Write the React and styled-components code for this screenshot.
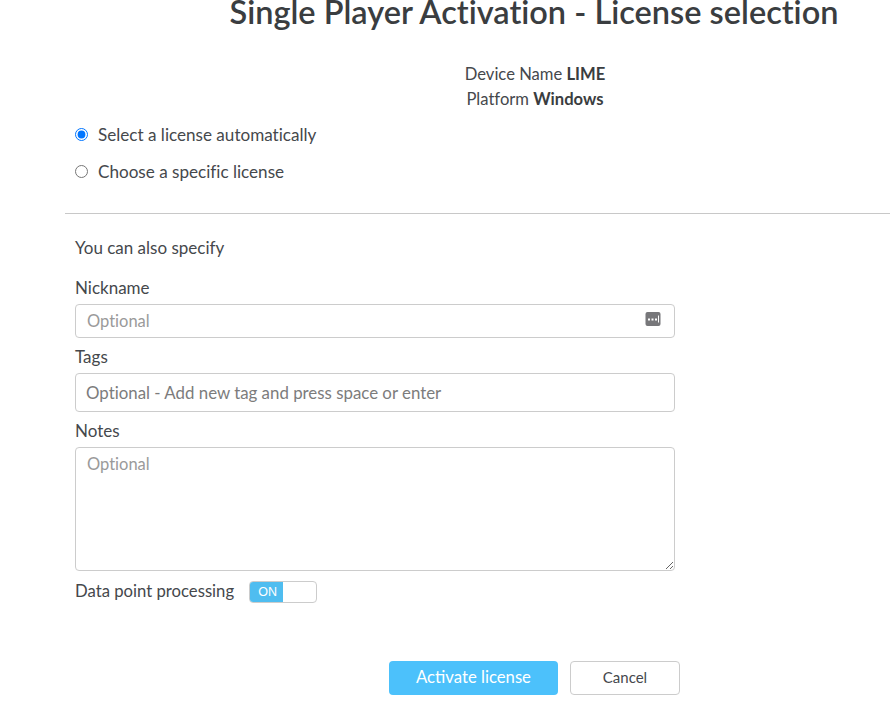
import React, { useState } from "react";
import styled, { createGlobalStyle } from "styled-components";

const GlobalStyle = createGlobalStyle`
  html, body {
    margin: 0;
    padding: 0;
    background: #fff;
    overflow: hidden;
  }
  body {
    font-family: Lato, "Open Sans", "Liberation Sans", sans-serif;
    font-variant-ligatures: none;
    color: #45484c;
  }
`;

const Page = styled.div`
  width: 890px;
  height: 716px;
  overflow: hidden;
  padding-left: 65px;
  box-sizing: border-box;
`;

const Title = styled.h1`
  margin: 0;
  width: 938px;
  height: 24px;
  text-align: center;
  font-size: 32.5px;
  line-height: 24px;
  font-weight: 600;
  color: #3a3d40;
  white-space: nowrap;
`;

const DeviceInfo = styled.div`
  margin-top: 38px;
  padding-left: 399px;
  width: 142px;
  text-align: center;
  font-size: 16.6px;
  line-height: 25px;
  white-space: nowrap;

  b {
    font-weight: 700;
    color: #3a3d40;
  }
`;

const Choices = styled.div`
  display: flex;
  flex-direction: column;
  gap: 17px;
  margin-top: 12px;
  padding-left: 10px;
`;

const Choice = styled.label`
  display: flex;
  align-items: center;
  gap: 10px;
  height: 20px;
  font-size: 17.1px;
  cursor: pointer;

  input {
    margin: 0;
    width: 13px;
    height: 13px;
    accent-color: #0075ff;
  }
`;

const Divider = styled.hr`
  margin: 32px 0 0;
  border: 0;
  border-top: 1px solid #c8c8c8;
`;

const Form = styled.div`
  display: flex;
  flex-direction: column;
  width: 600px;
  margin-left: 10px;
`;

const Hint = styled.div`
  margin-top: 24px;
  font-size: 17px;
  line-height: 20px;
`;

const Label = styled.div`
  font-size: 17px;
  line-height: 20px;
  margin-top: ${(p) => p.$top}px;
  margin-bottom: ${(p) => p.$bottom}px;
`;

const InputWrap = styled.div`
  position: relative;
  height: 34px;
`;

const fieldStyle = `
  display: block;
  width: 100%;
  box-sizing: border-box;
  border: 1px solid #cccccc;
  border-radius: 4px;
  font-family: inherit;
  font-variant-ligatures: none;
  color: #45484c;
  outline: none;
  background: #fff;
`;

const TextInput = styled.input`
  ${fieldStyle}
  height: ${(p) => p.$height}px;
  padding: 0 ${(p) => p.$pad}px 1px;
  font-size: ${(p) => p.$size}px;

  &::placeholder {
    color: ${(p) => p.$hint};
    opacity: 1;
  }
`;

const KeyIcon = styled.svg`
  position: absolute;
  top: 8px;
  right: 14px;
  width: 16px;
  height: 14px;
`;

const Notes = styled.textarea`
  ${fieldStyle}
  height: 124px;
  padding: 6px 11px;
  font-size: 16.5px;
  resize: vertical;

  &::placeholder {
    color: #9a9a9a;
    opacity: 1;
  }
`;

const SwitchRow = styled.div`
  display: flex;
  align-items: center;
  gap: 15px;
  height: 22px;
  margin-top: 10px;
  font-size: 16.7px;
`;

const SwitchLabel = styled.span`
  margin-bottom: 3px;
`;

const Switch = styled.button`
  display: flex;
  flex: none;
  width: 68px;
  height: 22px;
  padding: 0;
  box-sizing: border-box;
  border: 1px solid #cccccc;
  border-radius: 4px;
  background: #fff;
  overflow: hidden;
  cursor: pointer;
`;

const SwitchOn = styled.span`
  width: 33px;
  height: 100%;
  padding-left: 2px;
  box-sizing: border-box;
  background: #4fbdf0;
  color: #fff;
  font-family: inherit;
  font-size: 12.5px;
  line-height: 21px;
  text-align: center;
`;

const Actions = styled.div`
  display: flex;
  gap: 12px;
  margin-top: 58px;
  margin-left: 314px;
`;

const Button = styled.button`
  flex: none;
  height: 34px;
  padding: 0 0 2px;
  box-sizing: border-box;
  border-radius: 4px;
  font-family: inherit;
  cursor: pointer;
`;

const PrimaryButton = styled(Button)`
  width: 169px;
  border: 0;
  background: #4cc1fb;
  color: #fff;
  font-size: 16.7px;
`;

const CancelButton = styled(Button)`
  width: 110px;
  border: 1px solid #cccccc;
  background: #fff;
  color: #45484c;
  font-size: 15px;
`;

export default function App() {
  const [mode, setMode] = useState("auto");

  return (
    <>
      <GlobalStyle />
      <Page>
        <Title>Single Player Activation - License selection</Title>
        <DeviceInfo>
          <div>
            Device Name <b>LIME</b>
          </div>
          <div>
            Platform <b>Windows</b>
          </div>
        </DeviceInfo>
        <Choices>
          <Choice>
            <input type="radio" checked={mode === "auto"} onChange={() => setMode("auto")} />
            Select a license automatically
          </Choice>
          <Choice>
            <input type="radio" checked={mode === "manual"} onChange={() => setMode("manual")} />
            Choose a specific license
          </Choice>
        </Choices>
        <Divider />
        <Form>
          <Hint>You can also specify</Hint>
          <Label $top={20} $bottom={6}>Nickname</Label>
          <InputWrap>
            <TextInput placeholder="Optional" $height={34} $pad={11} $size={16.5} $hint="#9a9a9a" />
            <KeyIcon viewBox="0 0 16 14">
              <rect x="0.5" y="0" width="15" height="14" rx="2" fill="#77777a" />
              <rect x="3" y="6.5" width="2" height="2" fill="#fff" />
              <rect x="6.5" y="6.5" width="2" height="2" fill="#fff" />
              <rect x="10" y="6.5" width="2" height="2" fill="#fff" />
              <rect x="13" y="3.5" width="1" height="7" fill="#fff" />
            </KeyIcon>
          </InputWrap>
          <Label $top={9} $bottom={6}>Tags</Label>
          <TextInput
            placeholder="Optional - Add new tag and press space or enter"
            $height={39}
            $pad={10}
            $size={16.85}
            $hint="#7c7c7c"
          />
          <Label $top={9} $bottom={6}>Notes</Label>
          <Notes placeholder="Optional" />
          <SwitchRow>
            <SwitchLabel>Data point processing</SwitchLabel>
            <Switch type="button">
              <SwitchOn>ON</SwitchOn>
            </Switch>
          </SwitchRow>
          <Actions>
            <PrimaryButton type="button">Activate license</PrimaryButton>
            <CancelButton type="button">Cancel</CancelButton>
          </Actions>
        </Form>
      </Page>
    </>
  );
}
